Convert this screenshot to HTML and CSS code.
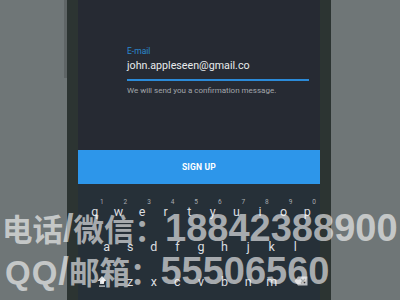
FILE: index.html
```html
<!DOCTYPE html>
<html>
<head>
<meta charset="utf-8">
<link rel="stylesheet" href="styles.css">
</head>
<body>
<div class="stage">
  <div class="side side-left"><div class="edge"></div></div>
  <div class="bezel"></div>
  <div class="screen">
    <div class="form">
      <div class="label">E-mail</div>
      <div class="input">john.appleseen@gmail.co</div>
      <div class="hint">We will send you a confirmation message.</div>
    </div>
    <div class="btn">SIGN UP</div>
    <div class="keyboard">
      <div class="row row1">
        <div class="key"><span class="num">1</span>q</div>
        <div class="key"><span class="num">2</span>w</div>
        <div class="key"><span class="num">3</span>e</div>
        <div class="key"><span class="num">4</span>r</div>
        <div class="key"><span class="num">5</span>t</div>
        <div class="key"><span class="num">6</span>y</div>
        <div class="key"><span class="num">7</span>u</div>
        <div class="key"><span class="num">8</span>i</div>
        <div class="key"><span class="num">9</span>o</div>
        <div class="key"><span class="num">0</span>p</div>
      </div>
      <div class="row row2">
        <div class="key">a</div><div class="key">s</div><div class="key">d</div><div class="key">f</div><div class="key">g</div><div class="key">h</div><div class="key">j</div><div class="key">k</div><div class="key">l</div>
      </div>
      <div class="row row3">
        <div class="key shift"><svg width="10" height="12" viewBox="0 0 10 12"><path d="M5 1 L9.5 6 H7 V9 H3 V6 H0.5 Z" fill="#d8dadc"/><rect x="2" y="10.5" width="6" height="1.2" fill="#d8dadc"/></svg></div>
        <div class="key">z</div><div class="key">x</div><div class="key">c</div><div class="key">v</div><div class="key">b</div><div class="key">n</div><div class="key">m</div>
        <div class="key back"><svg width="14" height="10" viewBox="0 0 14 10"><path d="M4 0.5 H13.5 V9.5 H4 L0.5 5 Z" fill="#b9bcc0"/><path d="M7 3 L11 7 M11 3 L7 7" stroke="#263038" stroke-width="1.4"/></svg></div>
      </div>
    </div>
  </div>
  <div class="bezel"></div>
  <div class="side side-right"></div>
</div>
<div class="watermark">
  <div class="wline line1"><span class="cjk">电话</span><span class="slash">/</span><span class="cjk">微信：</span><span class="dig">18842388900</span></div>
  <div class="wline line2"><span class="lat">QQ</span><span class="slash">/</span><span class="cjk">邮箱：</span><span class="dig">55506560</span></div>
</div>
</body>
</html>
```

FILE: styles.css
```css
* { box-sizing: border-box; margin: 0; padding: 0; }
html, body { width: 400px; height: 300px; overflow: hidden; }
body { background: #6f7677; font-family: Roboto, "Liberation Sans", sans-serif; position: relative; }

.stage { display: flex; height: 300px; }
.side { background: #6f7677; }
.side-left { width: 67px; position: relative; }
.edge { position: absolute; right: 0; top: 0; width: 3px; height: 78px; background: #5f6566; }
.side-right { flex: 1; }
.bezel { width: 11px; background: #2c3432; }
.screen { width: 242px; background: #262a33; display: flex; flex-direction: column; }

.form { padding: 45px 11px 0 49px; height: 150px; }
.label { font-size: 8.5px; line-height: 12px; color: #2a88d0; }
.input { font-size: 10.7px; line-height: 14px; color: #e8eaec; margin-top: 2px; padding-bottom: 6px; border-bottom: 2px solid #2b8ad8; }
.hint { font-size: 8px; line-height: 10px; color: #a2a6ab; margin-top: 5px; }

.btn { height: 34px; background: #2d96ea; color: #fff; font-weight: bold; font-size: 8.5px; display: flex; align-items: center; justify-content: center; letter-spacing: 0.2px; }

.keyboard { flex: 1; background: #263038; padding: 14px 0 0 5px; display: flex; flex-direction: column; }
.row { display: flex; }
.key { width: 23.6px; text-align: center; color: #dcdee0; font-size: 12.5px; position: relative; display: flex; justify-content: center; align-items: center; }
.row1 .key { height: 26px; }
.row2 { padding-left: 11.8px; }
.row2 .key { height: 40px; padding-top: 4px; }
.row3 .key { height: 30px; padding-top: 4px; }
.num { position: absolute; top: 0; right: 3px; font-size: 6.5px; color: #a8acb0; line-height: 8px; }
.shift { width: 35.4px; padding-left: 3px; }
.back { width: 35.4px; }

.watermark { position: absolute; left: 2px; top: 207px; color: rgba(255,255,255,0.6); font-weight: bold; white-space: nowrap; }
.wline { height: 43px; line-height: 43px; display: flex; align-items: baseline; }
.line2 { padding-left: 3px; }
.cjk { font-family: "Noto Sans CJK SC", sans-serif; font-size: 30.5px; }
.lat { font-family: "Liberation Sans", sans-serif; font-size: 33px; letter-spacing: 1px; }
.slash { font-family: "Liberation Sans", sans-serif; font-size: 38px; }
.dig { font-family: "Liberation Sans", sans-serif; font-size: 38px; }
```
